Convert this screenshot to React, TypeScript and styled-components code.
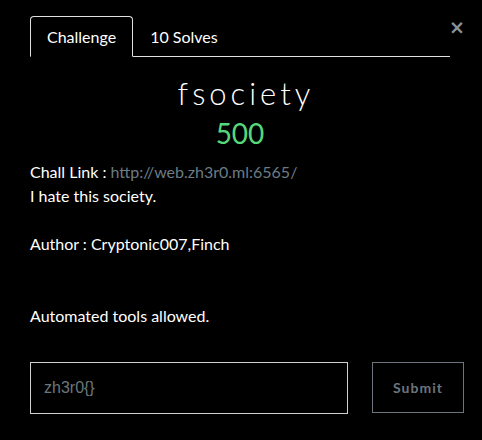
import React from "react";
import styled, { createGlobalStyle } from "styled-components";

const Global = createGlobalStyle`
  html, body { margin: 0; padding: 0; background: #000; }
  body { font-family: Lato, "Noto Sans", sans-serif; color: #fff; }
  * { box-sizing: border-box; }
`;

const Modal = styled.div`
  width: 482px;
  height: 440px;
  background: #000;
  padding: 16px 19px 0 30px;
  position: relative;
`;

const Close = styled.button`
  position: absolute;
  top: 18px;
  right: 19px;
  width: 14px;
  height: 18px;
  padding: 0;
  border: none;
  background: transparent;
  color: #8a9296;
  font-family: "DejaVu Sans", sans-serif;
  font-size: 19px;
  font-weight: bold;
  line-height: 18px;
  cursor: pointer;
`;

const Tabs = styled.div`
  display: flex;
  width: 420px;
  border-bottom: 1px solid #e0e0e0;
`;

const Tab = styled.div<{ $active?: boolean }>`
  height: 41px;
  padding: 0 16px;
  display: flex;
  align-items: center;
  font-size: 16px;
  color: #fff;
  margin-bottom: -1px;
  border: 1px solid ${(p) => (p.$active ? "#e0e0e0" : "transparent")};
  border-bottom-color: ${(p) => (p.$active ? "#000" : "transparent")};
  border-radius: 4px 4px 0 0;
`;

const Title = styled.h1`
  width: 420px;
  margin: 16px 0 0;
  padding-left: 12px;
  text-align: center;
  font-weight: 300;
  font-size: 31px;
  letter-spacing: 4px;
  line-height: 40px;
  color: #fff;
`;

const Points = styled.div`
  width: 420px;
  text-align: center;
  font-size: 28px;
  line-height: 32px;
  margin-top: 4px;
  color: #56d97a;
  font-weight: 400;
`;

const Description = styled.div`
  margin-top: 11px;
  font-size: 16px;
  line-height: 24px;
  color: #fff;
`;

const Line = styled.p<{ $gap?: number }>`
  margin: 0;
  margin-top: ${(p) => (p.$gap ?? 0) * 24}px;
`;

const Link = styled.a`
  color: #6c7c84;
  text-decoration: none;
`;

const Form = styled.form`
  margin-top: 34px;
  display: flex;
  align-items: flex-start;
  gap: 24px;
`;

const Input = styled.input`
  flex: 0 0 318px;
  width: 318px;
  height: 52px;
  background: #000;
  border: 1px solid #d0d0d0;
  padding: 0 13px;
  font-family: "Liberation Sans", Arial, sans-serif;
  font-size: 16px;
  color: #fff;
  outline: none;
  &::placeholder { color: #6c777b; }
`;

const Submit = styled.button`
  flex: 0 0 92px;
  width: 92px;
  height: 51px;
  background: #000;
  border: 1px solid #6c757d;
  color: #6c757d;
  font-family: Lato, sans-serif;
  font-weight: 700;
  font-size: 14px;
  letter-spacing: 1px;
`;

export default function App() {
  return (
    <Modal>
      <Global />
      <Close aria-label="Close">×</Close>
      <Tabs>
        <Tab $active>Challenge</Tab>
        <Tab>10 Solves</Tab>
      </Tabs>
      <Title>fsociety</Title>
      <Points>500</Points>
      <Description>
        <Line>
          Chall Link : <Link href="#">http://web.zh3r0.ml:6565/</Link>
        </Line>
        <Line>I hate this society.</Line>
        <Line $gap={1}>Author : Cryptonic007,Finch</Line>
        <Line $gap={2}>Automated tools allowed.</Line>
      </Description>
      <Form onSubmit={(e) => e.preventDefault()}>
        <Input placeholder="zh3r0{}" />
        <Submit type="submit">Submit</Submit>
      </Form>
    </Modal>
  );
}
